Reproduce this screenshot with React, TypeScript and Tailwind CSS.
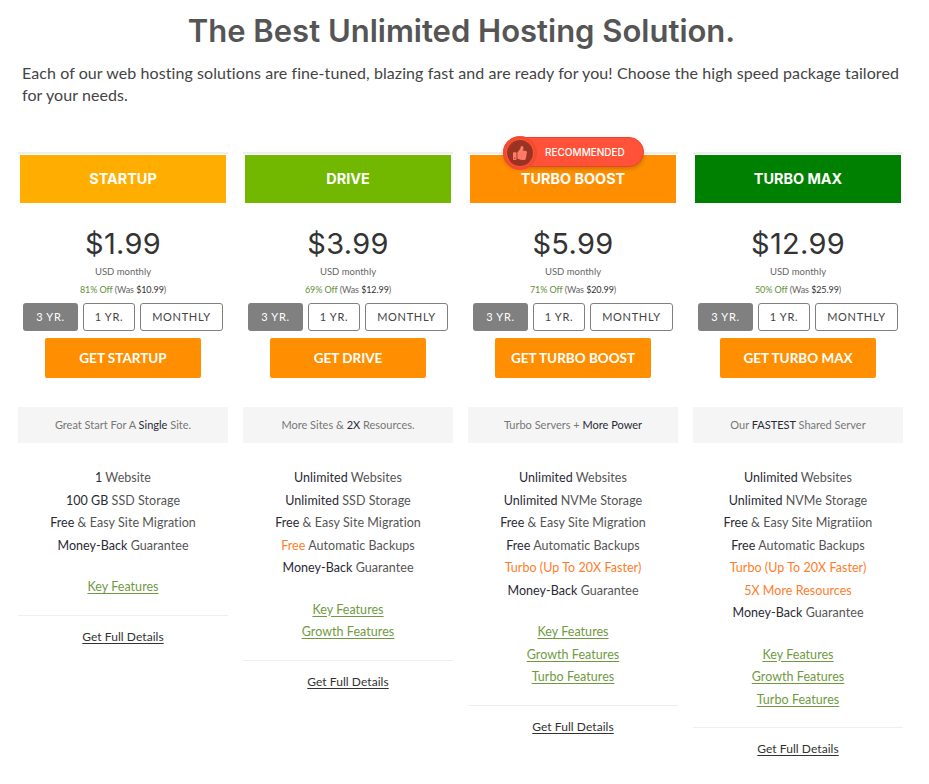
import React from "react";
import { FaThumbsUp } from "react-icons/fa";

type Part = { text: string; strong?: boolean; orange?: boolean };

const BODY = "font-['Lato',sans-serif]";
const HEAD = "font-['Inter',sans-serif]";

const plans: {
  name: string;
  color: string;
  price: string;
  off: string;
  was: string;
  cta: string;
  tag: Part[];
  features: Part[][];
  links: string[];
  recommended?: boolean;
}[] = [
  {
    name: "STARTUP",
    color: "bg-[#ffae00]",
    price: "$1.99",
    off: "81% Off",
    was: "$10.99",
    cta: "GET STARTUP",
    tag: [{ text: "Great Start For A " }, { text: "Single", strong: true }, { text: " Site." }],
    features: [
      [{ text: "1", strong: true }, { text: " Website" }],
      [{ text: "100 GB", strong: true }, { text: " SSD Storage" }],
      [{ text: "Free", strong: true }, { text: " & Easy Site Migration" }],
      [{ text: "Money-Back", strong: true }, { text: " Guarantee" }],
    ],
    links: ["Key Features"],
  },
  {
    name: "DRIVE",
    color: "bg-[#72b800]",
    price: "$3.99",
    off: "69% Off",
    was: "$12.99",
    cta: "GET DRIVE",
    tag: [{ text: "More Sites & " }, { text: "2X", strong: true }, { text: " Resources." }],
    features: [
      [{ text: "Unlimited", strong: true }, { text: " Websites" }],
      [{ text: "Unlimited", strong: true }, { text: " SSD Storage" }],
      [{ text: "Free", strong: true }, { text: " & Easy Site Migration" }],
      [{ text: "Free", orange: true }, { text: " Automatic Backups" }],
      [{ text: "Money-Back", strong: true }, { text: " Guarantee" }],
    ],
    links: ["Key Features", "Growth Features"],
  },
  {
    name: "TURBO BOOST",
    color: "bg-[#ff8f00]",
    price: "$5.99",
    off: "71% Off",
    was: "$20.99",
    cta: "GET TURBO BOOST",
    recommended: true,
    tag: [{ text: "Turbo Servers + " }, { text: "More Power", strong: true }],
    features: [
      [{ text: "Unlimited", strong: true }, { text: " Websites" }],
      [{ text: "Unlimited", strong: true }, { text: " NVMe Storage" }],
      [{ text: "Free", strong: true }, { text: " & Easy Site Migration" }],
      [{ text: "Free", strong: true }, { text: " Automatic Backups" }],
      [{ text: "Turbo (Up To 20X Faster)", orange: true }],
      [{ text: "Money-Back", strong: true }, { text: " Guarantee" }],
    ],
    links: ["Key Features", "Growth Features", "Turbo Features"],
  },
  {
    name: "TURBO MAX",
    color: "bg-[#008000]",
    price: "$12.99",
    off: "50% Off",
    was: "$25.99",
    cta: "GET TURBO MAX",
    tag: [{ text: "Our " }, { text: "FASTEST", strong: true }, { text: " Shared Server" }],
    features: [
      [{ text: "Unlimited", strong: true }, { text: " Websites" }],
      [{ text: "Unlimited", strong: true }, { text: " NVMe Storage" }],
      [{ text: "Free", strong: true }, { text: " & Easy Site Migratiion" }],
      [{ text: "Free", strong: true }, { text: " Automatic Backups" }],
      [{ text: "Turbo (Up To 20X Faster)", orange: true }],
      [{ text: "5X More Resources", orange: true }],
      [{ text: "Money-Back", strong: true }, { text: " Guarantee" }],
    ],
    links: ["Key Features", "Growth Features", "Turbo Features"],
  },
];

const Parts = ({ parts }: { parts: Part[] }) => (
  <>
    {parts.map((p, i) => (
      <span
        key={i}
        className={p.orange ? "text-[#ff7d2a]" : p.strong ? "text-[#2a2a35]" : ""}
      >
        {p.text}
      </span>
    ))}
  </>
);

const TermButtons = () => (
  <div className="mt-[6px] flex justify-center gap-[5px] text-[11px] tracking-[0.7px]">
    <div className="w-[55px] h-[28px] flex items-center justify-center rounded-[3px] bg-[#808080] text-white">
      3 YR.
    </div>
    <div className="w-[52px] h-[28px] flex items-center justify-center rounded-[3px] border border-[#808080] text-[#444]">
      1 YR.
    </div>
    <div className="w-[83px] h-[28px] flex items-center justify-center rounded-[3px] border border-[#808080] text-[#444]">
      MONTHLY
    </div>
  </div>
);

const Plan = ({ plan }: { plan: (typeof plans)[number] }) => (
  <div className={`relative text-center text-[#555] ${BODY}`}>
    <div className="border-t-2 border-[#eeeeee] pt-[1px] px-[2px]">
      <div
        className={`${plan.color} h-[48px] flex items-center justify-center text-white text-[14.4px] font-bold ${HEAD}`}
      >
        {plan.name}
      </div>
    </div>
    {plan.recommended && (
      <div className="absolute left-[35px] top-[-15px] w-[141px] h-[30px] flex items-center rounded-full bg-[#ff5238] border border-[#e8452f] shadow-[0_2px_4px_rgba(0,0,0,0.2)]">
        <div className="absolute left-[-1px] top-[-2px] w-[34px] h-[34px] rounded-full bg-[#ff5238] border-[3px] border-[#f44a30] flex items-center justify-center">
          <div className="w-[26px] h-[26px] rounded-full bg-[#9a3422] flex items-center justify-center">
            <FaThumbsUp className="text-[#ff7b68] text-[14px]" />
          </div>
        </div>
        <span className="ml-[41px] text-white text-[10px] font-medium font-['Inter',sans-serif]">
          RECOMMENDED
        </span>
      </div>
    )}
    <div className="mt-[21px] h-[40px] flex items-center justify-center text-[29px] text-[#333] tracking-[0.3px] font-normal font-['Inter',sans-serif]">
      {plan.price}
    </div>
    <div className="mt-[1px] text-[9.5px] leading-[14px] text-[#666]">USD monthly</div>
    <div className="mt-[4px] text-[9px] leading-[14px] tracking-[-0.1px] text-[#666]">
      <span className="text-[#5f8f3a]">{plan.off}</span> (Was{" "}
      <span className="text-[#333]">{plan.was}</span>)
    </div>
    <TermButtons />
    <div className="mt-[7px] mx-auto w-[156px] h-[40px] flex items-center justify-center rounded-[2px] bg-[#ff8f00] text-white text-[13.5px] font-bold">
      {plan.cta}
    </div>
    <div className="mt-[29px] h-[36px] flex items-center justify-center bg-[#f5f5f5] text-[11px] text-[#777]">
      <span>
        <Parts parts={plan.tag} />
      </span>
    </div>
    <div className="mt-[24px] text-[12.5px] leading-[22.5px] tracking-[0.05px]">
      {plan.features.map((f, i) => (
        <div key={i}>
          <Parts parts={f} />
        </div>
      ))}
    </div>
    <div className="mt-[19px] text-[12.5px] leading-[22.5px] text-[#6f9a3f] tracking-[0.05px]">
      {plan.links.map((l) => (
        <div key={l}>
          <a className="underline underline-offset-2" href="#">
            {l}
          </a>
        </div>
      ))}
    </div>
    <div className="mt-[16px] border-t border-[#eeeeee] pt-[10px] text-[12px] leading-[22.5px] text-[#333] tracking-[0.05px]">
      <a className="underline underline-offset-2" href="#">
        Get Full Details
      </a>
    </div>
  </div>
);

const App = () => {
  return (
    <div className="bg-white px-[18px] pb-[20px]">
      <h1 className="pt-[11px] pr-[6px] text-center text-[31px] leading-[40px] font-semibold text-[#555] font-['Inter',sans-serif]">
        The Best Unlimited Hosting Solution.
      </h1>
      <p className={`mt-[11px] px-[4px] text-[16px] leading-[22px] tracking-[0.08px] text-[#444] ${BODY}`}>
        Each of our web hosting solutions are fine-tuned, blazing fast and are ready for you! Choose
        the high speed package tailored for your needs.
      </p>
      <div className="mt-[46px] grid grid-cols-[210px_210px_210px_210px] gap-[15px] items-start">
        {plans.map((p) => (
          <Plan key={p.name} plan={p} />
        ))}
      </div>
    </div>
  );
};

export default App;
